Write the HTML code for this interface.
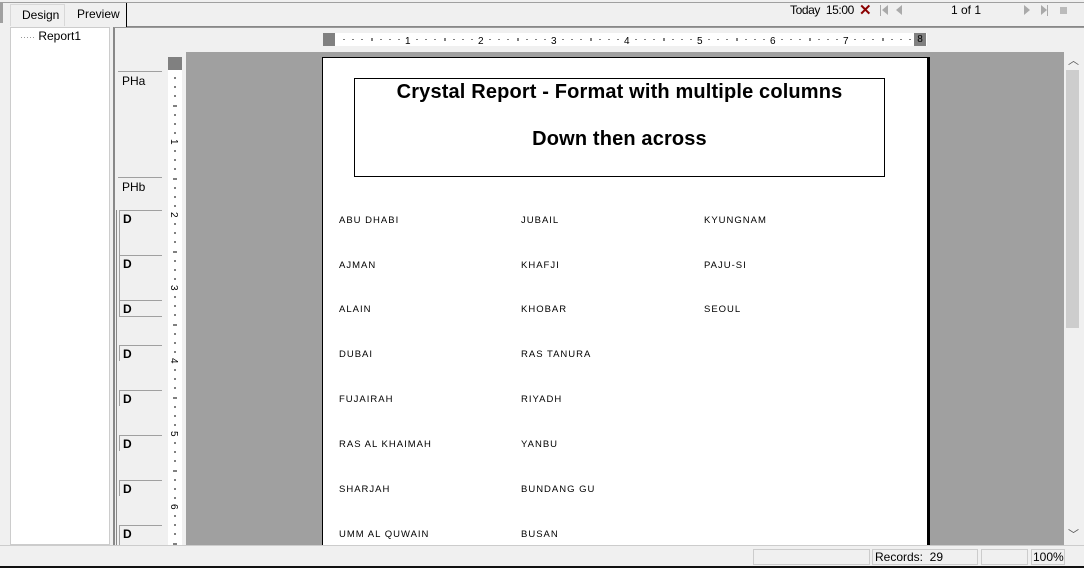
<!DOCTYPE html>
<html><head><style>
*{margin:0;padding:0;box-sizing:border-box}
body{width:1084px;height:568px;background:#f0f0f0;position:relative;overflow:hidden;font-family:"Liberation Sans",sans-serif;font-size:12px;color:#000}
.a{position:absolute}
.d{font-size:9.5px;letter-spacing:1px;position:absolute}
.lbl{position:absolute;left:118px;width:44px;border-top:1px solid #a0a0a0;font-size:12px;padding-left:4px;padding-top:2px}
.dl{position:absolute;left:119px;width:43px;border-top:1px solid #a0a0a0;border-left:1px solid #a0a0a0;font-size:12px;padding-left:3px;padding-top:1px;font-weight:bold}
</style></head><body>
<div class="a" style="left:0;top:2px;width:1084px;height:1px;background:#a0a0a0"></div>
<div class="a" style="left:0;top:3px;width:3px;height:20px;background:#a0a0a0"></div>
<div class="a" style="left:10px;top:4px;width:55px;height:22px;border:1px solid #d8d8d8;border-bottom:none;padding:3px 0 0 11px">Design</div>
<div class="a" style="left:65px;top:3px;width:62px;height:24px;border-right:1px solid #000;padding:4px 0 0 12px">Preview</div>
<div class="a" style="left:127px;top:26px;width:957px;height:1px;background:#888"></div>
<div class="a" style="left:790px;top:3px;letter-spacing:-0.4px">Today&nbsp; 15:00</div>
<div class="a" style="left:859px;top:1px;color:#8b0000;font-size:15px;font-weight:bold">✕</div>
<div class="a" style="left:880px;top:5px;width:1px;height:11px;background:#aaa"></div>
<div class="a" style="left:882px;top:5px;width:0;height:0;border:5px solid transparent;border-right:6px solid #aaa;border-left:none"></div>
<div class="a" style="left:896px;top:5px;width:0;height:0;border:5px solid transparent;border-right:6px solid #aaa;border-left:none"></div>
<div class="a" style="left:951px;top:3px">1 of 1</div>
<div class="a" style="left:1024px;top:5px;border:5px solid transparent;border-left:6px solid #aaa;border-right:none"></div>
<div class="a" style="left:1041px;top:5px;border:5px solid transparent;border-left:6px solid #aaa;border-right:none"></div>
<div class="a" style="left:1047px;top:5px;width:1px;height:11px;background:#aaa"></div>
<div class="a" style="left:1060px;top:7px;width:7px;height:7px;background:#bbb"></div>

<div class="a" style="left:10px;top:27px;width:100px;height:518px;background:#fff;border:1px solid #ccc"></div>
<div class="a" style="left:20px;top:29px"><span style="color:#888;font-size:9px">·····</span> Report1</div>
<div class="a" style="left:113px;top:27px;width:971px;height:518px;border-left:2px solid #888;border-top:1px solid #999"></div>

<div class="a" style="left:323px;top:33px;width:604px;height:13px;background:#fff"></div>
<div class="a" style="left:323px;top:33px;width:12px;height:13px;background:#808080"></div>
<div class="a" style="left:914px;top:33px;width:12px;height:13px;background:#808080;font-size:10px;text-align:center;line-height:13px">8</div>
<svg class="a" style="left:335px;top:33px" width="580" height="13">
<g fill="#000" font-size="10" font-family="Liberation Sans">
<text x="70" y="11">1</text><text x="143" y="11">2</text><text x="216" y="11">3</text><text x="289" y="11">4</text><text x="362" y="11">5</text><text x="435" y="11">6</text><text x="508" y="11">7</text>
</g>
<g stroke="#000">
<path d="M9 6v1M18 6v1M27 6v1M37 5v3M46 6v1M55 6v1M64 6v1M82 6v1M91 6v1M100 6v1M110 5v3M119 6v1M128 6v1M137 6v1M155 6v1M164 6v1M173 6v1M183 5v3M192 6v1M201 6v1M210 6v1M228 6v1M237 6v1M246 6v1M256 5v3M265 6v1M274 6v1M283 6v1M301 6v1M310 6v1M319 6v1M329 5v3M338 6v1M347 6v1M356 6v1M374 6v1M383 6v1M392 6v1M402 5v3M411 6v1M420 6v1M429 6v1M447 6v1M456 6v1M465 6v1M475 5v3M484 6v1M493 6v1M502 6v1M520 6v1M529 6v1M538 6v1M548 5v3M557 6v1M566 6v1M575 6v1"/>
</g></svg>

<div class="a" style="left:168px;top:57px;width:14px;height:488px;background:#fff"></div>
<div class="a" style="left:168px;top:57px;width:14px;height:13px;background:#808080"></div>
<svg class="a" style="left:168px;top:70px" width="14" height="475">
<g stroke="#000"><path id="t" d="M6 8h2M6 17h2M6 26h2M5 36h4M6 45h2M6 54h2M6 63h2"/>
<use href="#t" y="73"/><use href="#t" y="146"/><use href="#t" y="219"/><use href="#t" y="292"/><use href="#t" y="365"/><use href="#t" y="438"/></g>
<g font-size="10" font-family="Liberation Sans"><text transform="translate(3,69) rotate(90)">1</text><text transform="translate(3,142) rotate(90)">2</text><text transform="translate(3,215) rotate(90)">3</text><text transform="translate(3,288) rotate(90)">4</text><text transform="translate(3,361) rotate(90)">5</text><text transform="translate(3,434) rotate(90)">6</text></g>
</svg>

<div class="lbl" style="top:71px">PHa</div>
<div class="lbl" style="top:177px">PHb</div>
<div class="dl" style="top:210px;height:45px">D</div>
<div class="dl" style="top:255px;height:45px">D</div>
<div class="dl" style="top:300px;height:17px;border-bottom:1px solid #a0a0a0">D</div>
<div class="dl" style="top:345px;height:16px">D</div>
<div class="dl" style="top:390px;height:16px">D</div>
<div class="dl" style="top:435px;height:16px">D</div>
<div class="dl" style="top:480px;height:16px">D</div>
<div class="dl" style="top:525px;height:20px">D</div>
<div class="a" style="left:116px;top:210px;width:1px;height:335px;background:#888"></div>

<div class="a" style="left:186px;top:52px;width:878px;height:493px;background:#a0a0a0"></div>
<div class="a" style="left:322px;top:57px;width:608px;height:488px;background:#000"></div>
<div class="a" style="left:323px;top:58px;width:604px;height:487px;background:#fff"></div>
<div class="a" style="left:354px;top:78px;width:531px;height:99px;border:1px solid #000;text-align:center;font-weight:bold;font-size:20px;letter-spacing:0.15px">
<div style="margin-top:2px">Crystal Report - Format with multiple columns</div>
<div style="margin-top:24px">Down then across</div></div>

<div class="d" style="left:339px;top:215px">ABU DHABI</div><div class="d" style="left:521px;top:215px">JUBAIL</div><div class="d" style="left:704px;top:215px">KYUNGNAM</div>
<div class="d" style="left:339px;top:260px">AJMAN</div><div class="d" style="left:521px;top:260px">KHAFJI</div><div class="d" style="left:704px;top:260px">PAJU-SI</div>
<div class="d" style="left:339px;top:304px">ALAIN</div><div class="d" style="left:521px;top:304px">KHOBAR</div><div class="d" style="left:704px;top:304px">SEOUL</div>
<div class="d" style="left:339px;top:349px">DUBAI</div><div class="d" style="left:521px;top:349px">RAS TANURA</div>
<div class="d" style="left:339px;top:394px">FUJAIRAH</div><div class="d" style="left:521px;top:394px">RIYADH</div>
<div class="d" style="left:339px;top:439px">RAS AL KHAIMAH</div><div class="d" style="left:521px;top:439px">YANBU</div>
<div class="d" style="left:339px;top:484px">SHARJAH</div><div class="d" style="left:521px;top:484px">BUNDANG GU</div>
<div class="d" style="left:339px;top:529px">UMM AL QUWAIN</div><div class="d" style="left:521px;top:529px">BUSAN</div>

<div class="a" style="left:1064px;top:52px;width:17px;height:493px;background:#f0f0f0"></div>
<div class="a" style="left:1066px;top:70px;width:13px;height:258px;background:#cdcdcd"></div>
<div class="a" style="left:1068px;top:52px;font-size:11px;color:#555">︿</div>
<div class="a" style="left:1068px;top:526px;font-size:11px;color:#555">﹀</div>

<div class="a" style="left:0;top:545px;width:1084px;height:1px;background:#ccc"></div>
<div class="a" style="left:753px;top:549px;width:117px;height:16px;border:1px solid #ccc"></div>
<div class="a" style="left:872px;top:549px;width:106px;height:16px;border:1px solid #ccc;padding-left:2px">Records:&nbsp; 29</div>
<div class="a" style="left:981px;top:549px;width:47px;height:16px;border:1px solid #ccc"></div>
<div class="a" style="left:1031px;top:549px;width:34px;height:16px;border:1px solid #ccc;padding-left:1px">100%</div>
<div class="a" style="left:0;top:566px;width:1084px;height:2px;background:#111"></div>
</body></html>
